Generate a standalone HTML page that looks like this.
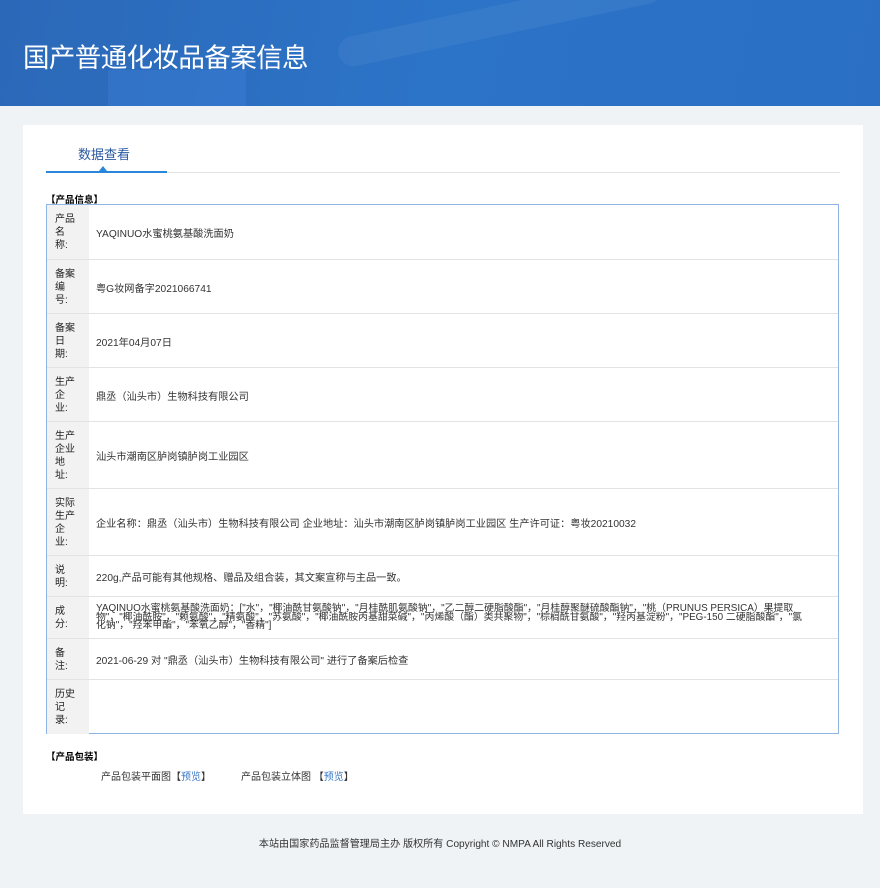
<!DOCTYPE html>
<html><head><meta charset="utf-8"><style>
body{margin:0;width:880px;height:888px;background:#eff3f6;font-family:"Liberation Sans","Noto Sans CJK SC",sans-serif;position:relative;overflow:hidden}
.hd{position:absolute;left:0;top:0;width:880px;height:106px;background:linear-gradient(100deg,#2c68b8 0%,#2c74c8 50%,#2a6fc4 100%);overflow:hidden}
.hd .b1{position:absolute;left:108px;top:70px;width:138px;height:40px;background:#3d80d6;opacity:.4}
.hd .b2{position:absolute;left:335px;top:5px;width:330px;height:30px;border-radius:20px;background:rgba(255,255,255,.05);transform:rotate(-12deg)}
.hd h1{position:absolute;left:23px;top:36px;margin:0;font-size:26.5px;font-weight:normal;color:#fff;letter-spacing:-0.6px}
.card{position:absolute;left:23px;top:125px;width:840px;height:689px;background:#fff}
.tab{position:absolute;left:55px;top:19px;font-size:13px;color:#2a5aa0}
.tl{position:absolute;left:23px;top:47px;width:794px;height:1px;background:#e3e3e3}
.ta{position:absolute;left:23px;top:46px;width:121px;height:2px;background:#2a86d8}
.tri{position:absolute;left:76px;top:41px;width:0;height:0;border-left:4px solid transparent;border-right:4px solid transparent;border-bottom:5px solid #2a86d8}
.sec{position:absolute;font-size:9.5px;font-weight:bold;color:#000}
.tb{position:absolute;left:23px;top:79px;width:791px;height:528px;border:1px solid #8fb4e6}
.r{position:absolute;left:0;width:791px;border-top:1px solid #e3e3e3;font-size:10.2px;color:#333}
.r .l{position:absolute;left:0;top:0;bottom:0;width:42px;background:#f2f2f2;display:flex;align-items:center;padding-left:8px;box-sizing:border-box;font-size:10px;line-height:13px;color:#222}
.r .v{position:absolute;left:49px;right:30px;top:0;bottom:0;display:flex;align-items:center}
.ft{position:absolute;left:0;width:880px;top:835px;text-align:center;font-size:10.1px;color:#333}
a{color:#3a78c8;text-decoration:none}
</style></head><body>
<div class="hd"><div class="b2"></div><div class="b1"></div><h1>国产普通化妆品备案信息</h1></div>
<div class="card">
<div class="tab">数据查看</div><div class="tl"></div><div class="ta"></div><div class="tri"></div>
<div class="sec" style="left:23px;top:67px">【产品信息】</div>
<div class="tb">
<div class="r" style="top:0;height:54px;border-top:none"><div class="l">产品<br>名<br>称:</div><div class="v">YAQINUO水蜜桃氨基酸洗面奶</div></div>
<div class="r" style="top:54px;height:54px"><div class="l">备案<br>编<br>号:</div><div class="v">粤G妆网备字2021066741</div></div>
<div class="r" style="top:108px;height:54px"><div class="l">备案<br>日<br>期:</div><div class="v">2021年04月07日</div></div>
<div class="r" style="top:162px;height:54px"><div class="l">生产<br>企<br>业:</div><div class="v">鼎丞（汕头市）生物科技有限公司</div></div>
<div class="r" style="top:216px;height:67px"><div class="l">生产<br>企业<br>地<br>址:</div><div class="v">汕头市潮南区胪岗镇胪岗工业园区</div></div>
<div class="r" style="top:283px;height:67px"><div class="l">实际<br>生产<br>企<br>业:</div><div class="v">企业名称：鼎丞（汕头市）生物科技有限公司 企业地址：汕头市潮南区胪岗镇胪岗工业园区 生产许可证：粤妆20210032</div></div>
<div class="r" style="top:350px;height:41px"><div class="l">说<br>明:</div><div class="v">220g,产品可能有其他规格、赠品及组合装，其文案宣称与主品一致。</div></div>
<div class="r" style="top:391px;height:42px"><div class="l">成<br>分:</div><div class="v" style="line-height:8.5px;font-size:9.9px;right:36px">YAQINUO水蜜桃氨基酸洗面奶：["水"，"椰油酰甘氨酸钠"，"月桂酰肌氨酸钠"，"乙二醇二硬脂酸酯"，"月桂醇聚醚硫酸酯钠"，"桃（PRUNUS PERSICA）果提取物"，"椰油酰胺"，"赖氨酸"，"精氨酸"，"苏氨酸"，"椰油酰胺丙基甜菜碱"，"丙烯酸（酯）类共聚物"，"棕榈酰甘氨酸"，"羟丙基淀粉"，"PEG-150 二硬脂酸酯"，"氯化钠"，"羟苯甲酯"，"苯氧乙醇"，"香精"]</div></div>
<div class="r" style="top:433px;height:41px"><div class="l">备<br>注:</div><div class="v">2021-06-29 对 "鼎丞（汕头市）生物科技有限公司" 进行了备案后检查</div></div>
<div class="r" style="top:474px;height:54px"><div class="l">历史<br>记<br>录:</div><div class="v"></div></div>
</div>
<div class="sec" style="left:23px;top:624px">【产品包装】</div>
<div style="position:absolute;left:78px;top:643px;font-size:10px;color:#333">产品包装平面图【<a>预览</a>】</div>
<div style="position:absolute;left:218px;top:643px;font-size:10px;color:#333">产品包装立体图 【<a>预览</a>】</div>
</div>
<div class="ft">本站由国家药品监督管理局主办 版权所有 Copyright © NMPA All Rights Reserved</div>
</body></html>
